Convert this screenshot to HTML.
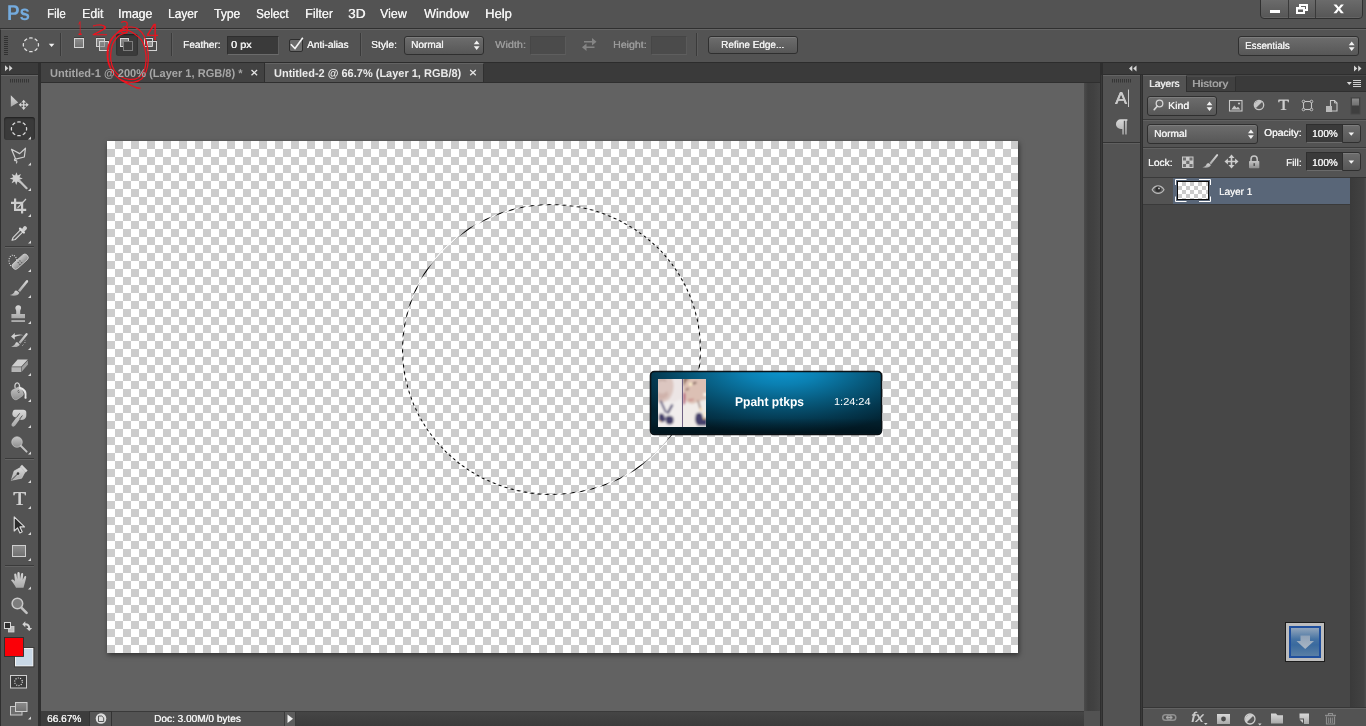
<!DOCTYPE html>
<html lang="en">
<head>
<meta charset="utf-8">
<title>Photoshop - Untitled-2</title>
<style>
html,body{margin:0;padding:0;background:#535353;}
body{width:1366px;height:726px;overflow:hidden;font-family:"Liberation Sans",sans-serif;}
#app{position:relative;width:1366px;height:726px;overflow:hidden;background:#535353;}
#app div{position:absolute;box-sizing:border-box;}
#ico{position:absolute;left:0;top:0;}
.t{text-rendering:geometricPrecision;position:absolute;white-space:pre;transform-origin:0 0;display:block;text-shadow:.35px 0 0 currentColor;}
.grad{background:linear-gradient(#6d6d6d,#575757);border:1px solid #2f2f2f;border-radius:3px;box-shadow:inset 0 1px 0 rgba(255,255,255,.12);}
.inp{background:#3a3a3a;border:1px solid #2e2e2e;border-bottom-color:#6b6b6b;border-right-color:#5f5f5f;}
.inpd{background:#4b4b4b;border:1px solid #464646;border-bottom-color:#5e5e5e;border-right-color:#5a5a5a;}
.sep{width:1px;background:#3a3a3a;box-shadow:1px 0 0 #5c5c5c;}

</style>
</head>
<body>
<div id="app">
<!-- menu bar -->
<div style="left:0;top:0;width:1366px;height:28px;background:#535353"></div>
<div style="left:1260px;top:-2px;width:103px;height:21px;border-radius:0 0 4px 4px;background:linear-gradient(#6c6c6c,#565656);border:1px solid #303030;box-shadow:inset 0 -1px 0 rgba(255,255,255,.08)"></div>
<div style="left:1288px;top:0;width:1px;height:18px;background:#3a3a3a"></div>
<div style="left:1315px;top:0;width:1px;height:18px;background:#3a3a3a"></div>
<!-- options bar -->
<div style="left:0;top:28px;width:1366px;height:1px;background:#303030"></div>
<div style="left:0;top:29px;width:1366px;height:33px;background:#535353;border-top:1px solid #656565;border-left:1px solid #303030"></div>
<div style="left:0;top:62px;width:1366px;height:1px;background:#2c2c2c"></div>
<div class="sep" style="left:60px;top:33px;height:23px"></div>
<div class="sep" style="left:171px;top:33px;height:23px"></div>
<div class="sep" style="left:360px;top:33px;height:23px"></div>
<div class="sep" style="left:696px;top:33px;height:23px"></div>
<div style="left:116px;top:34px;width:22px;height:22px;background:#3b3b3b;border-radius:3px;box-shadow:inset 0 1px 2px rgba(0,0,0,.5)"></div>
<div class="inp" style="left:227px;top:36px;width:52px;height:19px"></div>
<div style="left:289px;top:39px;width:14px;height:13px;background:#6b6b6b;border:1px solid #2e2e2e;border-radius:2px"></div>
<div class="grad" style="left:404px;top:36px;width:80px;height:19px"></div>
<div class="inpd" style="left:530px;top:36px;width:36px;height:19px"></div>
<div class="inpd" style="left:651px;top:36px;width:36px;height:19px"></div>
<div class="grad" style="left:708px;top:36px;width:90px;height:18px"></div>
<div class="grad" style="left:1238px;top:36px;width:121px;height:20px"></div>
<!-- toolbar -->
<div style="left:0;top:63px;width:41px;height:663px;background:#2f2f2f"></div>
<div style="left:1px;top:63px;width:37px;height:11px;background:#3b3b3b"></div>
<div style="left:1px;top:75px;width:37px;height:651px;background:#535353;border-top:1px solid #666"></div>
<div style="left:4px;top:117px;width:31px;height:23px;background:#3a3a3a;border-radius:3px;box-shadow:inset 0 1px 2px rgba(0,0,0,.5)"></div>
<div style="left:5px;top:246px;width:29px;height:1px;background:#3a3a3a;box-shadow:0 1px 0 #626262"></div>
<div style="left:5px;top:458px;width:29px;height:1px;background:#3a3a3a;box-shadow:0 1px 0 #626262"></div>
<div style="left:5px;top:565px;width:29px;height:1px;background:#3a3a3a;box-shadow:0 1px 0 #626262"></div>
<!-- document tab bar -->
<div style="left:41px;top:63px;width:1059px;height:20px;background:#3a3a3a"></div>
<div style="left:41px;top:63px;width:224px;height:19px;background:#424242;border-right:1px solid #2f2f2f"></div>
<div style="left:265px;top:63px;width:219px;height:19px;background:#535353;border-top:1px solid #636363;border-right:1px solid #303030"></div>
<div style="left:41px;top:82px;width:1059px;height:1px;background:#2f2f2f"></div>
<div style="left:484px;top:82px;width:616px;height:1px;background:#2f2f2f"></div>
<!-- canvas area -->
<div style="left:41px;top:83px;width:1043px;height:628px;background:#626262"></div>
<div style="left:1084px;top:83px;width:16px;height:628px;background:linear-gradient(90deg,#4b4b4b,#3f3f3f 25%,#414141 60%,#474747 100%)"></div>
<div id="doc" style="left:107px;top:141px;width:911px;height:512px;background-color:#fff;background-image:conic-gradient(#ccc 0 25%,#fff 0 50%,#ccc 0 75%,#fff 0);background-size:16px 16px;background-position:0 0;box-shadow:1px 2px 5px rgba(0,0,0,.5)"></div>
<!-- status bar -->
<div style="left:41px;top:711px;width:1059px;height:15px;background:linear-gradient(#454545,#3b3b3b);border-top:1px solid #3a3a3a"></div>
<div style="left:41px;top:711px;width:48px;height:15px;background:#3d3d3d"></div>
<div style="left:89px;top:711px;width:23px;height:15px;background:#555;border-left:1px solid #333;border-right:1px solid #333;border-top:1px solid #333"></div>
<div style="left:112px;top:711px;width:172px;height:15px;background:#535353;border-top:1px solid #3a3a3a"></div>
<div style="left:284px;top:711px;width:12px;height:15px;background:#5c5c5c;border-left:1px solid #3a3a3a;border-right:1px solid #3a3a3a;border-top:1px solid #3a3a3a"></div>
<div style="left:1084px;top:711px;width:16px;height:15px;background:#525252"></div>
<!-- right dock -->
<div style="left:1100px;top:63px;width:266px;height:663px;background:#2e2e2e"></div><div style="left:1101px;top:75px;width:1px;height:651px;background:#3a3a3a"></div><div style="left:1141px;top:75px;width:1px;height:651px;background:#3a3a3a"></div>
<div style="left:1103px;top:63px;width:263px;height:11px;background:#3a3a3a"></div>
<div style="left:1103px;top:75px;width:37px;height:651px;background:#535353;border-top:1px solid #646464"></div>
<div style="left:1103px;top:142px;width:37px;height:1px;background:#333;box-shadow:0 1px 0 #606060"></div>
<!-- layers panel -->
<div style="left:1143px;top:75px;width:223px;height:651px;background:#535353"></div>
<div style="left:1143px;top:75px;width:223px;height:17px;background:#3a3a3a;border-bottom:1px solid #2f2f2f;border-top:1px solid #474747"></div>
<div style="left:1143px;top:75px;width:44px;height:17px;background:#535353;border-top:1px solid #666;border-right:1px solid #2f2f2f"></div>
<div style="left:1187px;top:76px;width:49px;height:15px;background:#404040;border-right:1px solid #303030;border-top:1px solid #4a4a4a"></div>
<div class="grad" style="left:1147px;top:96px;width:70px;height:20px"></div>
<div style="left:1143px;top:119px;width:223px;height:1px;background:#3a3a3a;box-shadow:0 1px 0 #616161"></div>
<div class="grad" style="left:1147px;top:124px;width:111px;height:20px"></div>
<div style="left:1143px;top:147px;width:223px;height:1px;background:#3a3a3a;box-shadow:0 1px 0 #616161"></div>
<div class="inp" style="left:1306px;top:124px;width:37px;height:19px;border-right:none"></div>
<div class="grad" style="left:1342px;top:124px;width:19px;height:19px;border-radius:0 3px 3px 0"></div>
<div class="inp" style="left:1306px;top:152px;width:37px;height:19px;border-right:none"></div>
<div class="grad" style="left:1342px;top:152px;width:19px;height:19px;border-radius:0 3px 3px 0"></div>
<div style="left:1143px;top:177px;width:207px;height:531px;background:#474747;border-top:1px solid #3a3a3a"></div>
<div style="left:1350px;top:177px;width:16px;height:531px;background:linear-gradient(90deg,#3a3a3a,#424242 85%,#4d4d4d 100%);border-top:1px solid #333"></div>
<div style="left:1143px;top:178px;width:207px;height:27px;background:#535353;border-bottom:1px solid #3a3a3a"></div>
<div style="left:1173px;top:178px;width:177px;height:26px;background:#596678"></div>
<div style="left:1143px;top:707px;width:223px;height:19px;background:#535353;border-top:1px solid #363636;box-shadow:inset 0 1px 0 #626262"></div>
<!-- blue icon -->
<div style="left:1285px;top:622px;width:40px;height:40px;background:#bdbdbd;border:1px solid #1c1c1c"></div>
<div style="left:1289px;top:626px;width:32px;height:32px;border:2px solid #1f4f9e;background:linear-gradient(#93a6bb 0%,#4673a3 40%,#3a6a9e 60%,#5a7fa4 100%)"></div>

<svg id="cv" width="1366" height="726" viewBox="0 0 1366 726" style="position:absolute;left:0;top:0">
<g id="canvas">
<defs><pattern id="ants" width="8" height="8" patternUnits="userSpaceOnUse" patternTransform="translate(-.5 0)"><rect width="8" height="8" fill="#fff"/><path d="M0 0h4l-4 4zM8 0v4l-4 4h-4z" fill="#000"/></pattern></defs>
<ellipse cx="551.500" cy="349.500" rx="149" ry="145" fill="none" stroke="url(#ants)" stroke-width="1.100"/>
<!-- media widget -->
<defs>
<radialGradient id="wg" cx="0" cy="0" r="1" gradientUnits="userSpaceOnUse" gradientTransform="translate(782 368) scale(165 66)">
<stop offset="0" stop-color="#0d98d2"/><stop offset=".25" stop-color="#0b80b2"/><stop offset=".55" stop-color="#07587a"/><stop offset=".8" stop-color="#04384f"/><stop offset="1" stop-color="#022332"/>
</radialGradient>
<linearGradient id="wedge" x1="0" y1="0" x2="0" y2="1"><stop offset="0" stop-color="#000" stop-opacity="0"/><stop offset=".75" stop-color="#000" stop-opacity="0"/><stop offset="1" stop-color="#000" stop-opacity=".45"/></linearGradient>
<filter id="bl" x="-20%" y="-20%" width="140%" height="140%"><feGaussianBlur stdDeviation="1.050"/></filter>
<clipPath id="avc"><rect x="658" y="379" width="48" height="48"/></clipPath>
</defs>
<rect x="650.500" y="371.500" width="231" height="63" rx="4" fill="url(#wg)" stroke="#0c1216" stroke-width="1.600"/>
<rect x="651.500" y="372.500" width="229" height="61" rx="3.500" fill="url(#wedge)"/>
<!-- avatar (abstracted photo) -->
<rect x="658" y="379" width="48" height="48" fill="#ebe3e2"/>
<g clip-path="url(#avc)"><g filter="url(#bl)">
<rect x="656" y="377" width="27" height="52" fill="#ece5e5"/>
<path d="M656 377h15.500c2 4 2.500 9 1.500 14-1 4.500-3.500 8.500-6.500 10.500-3.500 1.500-7 1.200-10.500.5z" fill="#dcc6c0"/>
<path d="M658 392c3 2.500 6.500 2 9-1l1.500 4c-2.500 4-7 5.500-10.500 4z" fill="#cfb2ab"/>
<path d="M659 381c2-1.500 5-1.500 7 0" stroke="#b79a94" stroke-width="1.300" fill="none"/>
<path d="M656 402c4 1.500 8 1 11-1.500l6 2 9.500-4v30h-26.500z" fill="#f1eded"/>
<path d="M660.500 400.500l5.500 12" stroke="#45416f" stroke-width="1.800" fill="none"/>
<path d="M672.500 404.500l-5 9" stroke="#45416f" stroke-width="2.200" fill="none"/>
<path d="M659 414.500c1.500-1.500 3.800-1.200 5 .5l1.500 4c-.3 2-1.500 3.200-3.300 3.300-1.800 0-3-1-3.500-3z" fill="#45416c"/>
<path d="M666 416.500c2-1.300 5-1 7 .5.800 2 .8 4.500-.2 6.500-2 1.200-4.500 1.200-6.300 0-1-2.200-1.200-4.800-.5-7z" fill="#45416c"/>
<circle cx="660.300" cy="421.300" r=".9" fill="#e8b878"/>
<rect x="683" y="377" width="25" height="52" fill="#efe9e6"/>
<path d="M683 377h25v22c-3 3-7 4.500-11 4.800-4.500.7-8.500-.3-11-2.800-2-3-3-7-3-11z" fill="#dcc0b4"/>
<path d="M683 377h9c-3 1.200-5.500 3.500-7 6.500l-2 3z" fill="#9a7868"/>
<ellipse cx="694.500" cy="383.200" rx="2.200" ry="1" fill="#6d5048" transform="rotate(-25 694.500 383.200)"/>
<ellipse cx="687.300" cy="389.300" rx="1.900" ry=".9" fill="#7a5a50" transform="rotate(-25 687.300 389.300)"/>
<path d="M688.500 399.500c1.500 1 3.500.8 5-.6" stroke="#c27878" stroke-width="1.200" fill="none"/>
<path d="M683 392.500l2.200 1v10l-2.200 1.500z" fill="#b24c72"/>
<path d="M683 405c3-1.500 6-1.500 9-1l14-5v30h-23z" fill="#f0ebe8"/>
<path d="M698 400.500l3 10.500" stroke="#8a6e66" stroke-width="1.300" fill="none"/>
<path d="M696 414c2-1.800 4.300-1.800 6 0l1 4c2-.8 3.500-.3 4 1v6.500h-9c-2-1.500-3-4-3-7z" fill="#45416c"/>
<circle cx="690.600" cy="384.200" r="1.700" fill="#fff2cc"/><circle cx="705" cy="394.500" r="1.700" fill="#fffaf0"/><circle cx="701" cy="409.300" r="1.500" fill="#ffe7bd"/><circle cx="704.800" cy="413.800" r="1.500" fill="#ffe9c0"/><circle cx="704.300" cy="418.300" r="1.300" fill="#f5cf9a"/>
</g>
<rect x="682" y="379" width="1" height="48" fill="#6f6283"/>
</g>
</g>

</svg>
<svg id="ico" width="1366" height="726" viewBox="0 0 1366 726">
<defs>
<linearGradient id="gBox" x1="0" y1="0" x2="0" y2="1"><stop offset="0" stop-color="#8c8c8c"/><stop offset="1" stop-color="#707070"/></linearGradient>
<linearGradient id="gIco" x1="0" y1="0" x2="0" y2="1"><stop offset="0" stop-color="#d9d9d9"/><stop offset="1" stop-color="#a9a9a9"/></linearGradient>
<linearGradient id="gIco2" x1="0" y1="0" x2="0" y2="1"><stop offset="0" stop-color="#c4c4c4"/><stop offset="1" stop-color="#8e8e8e"/></linearGradient>
<linearGradient id="gArrow" x1="0" y1="0" x2="0" y2="1"><stop offset="0" stop-color="#8fa2b8"/><stop offset="1" stop-color="#a9b6c4"/></linearGradient>
</defs>

<g id="winctl" fill="#fff">
<rect x="1270" y="10" width="10" height="3"/>
<path d="M1299 4h9v7h-3v-2h1v-3h-5v1h-2zM1296 7h9v7h-9zM1298 9.500v2.500h5v-2.500z" fill-rule="evenodd"/>
<path d="M1333.5 4.5h3l2.2 2.8 2.2-2.8h3l-3.7 4.3 3.7 4.4h-3l-2.2-2.9-2.2 2.9h-3l3.7-4.4z"/>
</g>
<g id="tabx" fill="none" stroke-width="1.300">
<path d="M251.500 70l5.600 5.200M257.100 70l-5.600 5.200" stroke="#e4e4e4"/>
<path d="M470.200 70l5.600 5.200M475.800 70l-5.600 5.200" stroke="#e4e4e4"/>
</g>
<g id="opt">
<path d="M4 36.500h4M4 38.500h4M4 40.500h4M4 42.500h4M4 44.500h4M4 46.500h4M4 48.500h4M4 50.500h4M4 52.500h4M4 54.500h4" stroke="#313131" stroke-width="1" fill="none"/>
<ellipse cx="30.900" cy="44.800" rx="7.600" ry="6.900" fill="#5d5d5d" stroke="#e0e0e0" stroke-width="1.250" pathLength="80" stroke-dasharray="6.200 3.800" stroke-dashoffset="3.100"/>
<path d="M48.800 43.800h5.600l-2.800 3.300z" fill="#f2f2f2"/>
<!-- new selection -->
<rect x="74.500" y="38.500" width="9" height="9" fill="url(#gBox)" stroke="#d4d4d4"/>
<path d="M74 37.500h10" stroke="#3e3e3e"/>
<!-- add -->
<path d="M96 37.500h9M105 40.500h4" stroke="#3e3e3e"/>
<rect x="96.500" y="38.500" width="8" height="8" fill="url(#gBox)" stroke="#d4d4d4"/>
<rect x="99.500" y="41.500" width="9" height="9" fill="url(#gBox)" fill-opacity=".8" stroke="#d4d4d4"/>
<path d="M100.500 46.500h4v-4.500" fill="none" stroke="#b4b4b4" stroke-opacity=".7"/>
<!-- subtract (active) -->
<path d="M120 37.500h9" stroke="#2c2c2c"/>
<rect x="120.500" y="38.500" width="8" height="8" fill="url(#gBox)" stroke="#d8d8d8"/>
<rect x="123.500" y="41.500" width="9" height="9" fill="#404040" stroke="#7d7d7d"/>
<!-- intersect -->
<path d="M144 37.500h9M153 40.500h4" stroke="#3e3e3e"/>
<rect x="144.500" y="38.500" width="8" height="8" fill="#4c4c4c" stroke="#d4d4d4"/>
<rect x="147.500" y="41.500" width="9" height="9" fill="#4c4c4c" stroke="#d4d4d4"/>
<rect x="148" y="42" width="4" height="4" fill="#8f8f8f"/>
<path d="M147.500 46.500h5v-5" fill="none" stroke="#d4d4d4"/>
<!-- checkbox tick -->
<path d="M290.800 44.200l4.200 4.300 7.800-10.800" fill="none" stroke="#f4f4f4" stroke-width="1.600"/>
<!-- dropdown arrows -->
<path d="M473.800 44.200l2.900-3.700 2.900 3.700zM473.800 46.200l2.900 3.700 2.900-3.700z" fill="#f2f2f2"/>
<path d="M1348.800 45.200l2.900-3.700 2.900 3.700zM1348.800 47.200l2.900 3.700 2.900-3.700z" fill="#f2f2f2"/>
<!-- swap -->
<g fill="#858585"><path d="M584 41h8v-3l4.500 3.800-4.500 3.700v-3h-8z"/><path d="M594.500 46.500h-8v-3l-4.500 3.800 4.500 3.700v-3h8z"/></g>
</g>

<g id="tools">
<!-- header arrows + grip -->
<path d="M5 65.200l3.300 3-3.300 3zM9.200 65.200l3.300 3-3.300 3z" fill="#d6d6d6"/>
<path d="M10.5 79v3.500M12.500 79v3.500M14.500 79v3.500M16.500 79v3.500M18.500 79v3.500M20.500 79v3.500M22.500 79v3.500M24.500 79v3.500M26.500 79v3.500M28.500 79v3.500" stroke="#353535" fill="none"/>
<!-- corner triangles -->
<path id="tri" d="M0 0v3h-3z" fill="#d8d8d8" transform="translate(31 136.500)"/>
<g fill="#d8d8d8">
<path d="M31 162.500v3h-3z"/><path d="M31 188v3h-3z"/><path d="M31 214v3h-3z"/><path d="M31 240.500v3h-3z"/>
<path d="M31 269v3h-3z"/><path d="M31 295v3h-3z"/><path d="M31 321v3h-3z"/><path d="M31 347v3h-3z"/>
<path d="M31 373v3h-3z"/><path d="M31 399v3h-3z"/><path d="M31 425v3h-3z"/><path d="M31 451.500v3h-3z"/>
<path d="M31 480v3h-3z"/><path d="M31 506v3h-3z"/><path d="M31 532v3h-3z"/><path d="M31 558v3h-3z"/>
<path d="M31 586.500v3h-3z"/><path d="M31 716.500v3h-3z"/>
</g>
<!-- move -->
<path d="M10.800 95.200v11.600l7.400-4.300z" fill="url(#gIco)"/>
<path d="M23.700 99.800l2.300 2.600h-1.700v1.800h1.900v-1.600l2.500 2.200-2.500 2.200v-1.600h-1.900v1.900h1.700l-2.300 2.600-2.300-2.600h1.700v-1.900h-1.900v1.600l-2.500-2.200 2.500-2.200v1.600h1.900v-1.800h-1.700z" fill="#d4d4d4"/>
<!-- elliptical marquee -->
<ellipse cx="19" cy="128.800" rx="7.600" ry="6.900" fill="none" stroke="#dadada" stroke-width="1.250" pathLength="80" stroke-dasharray="6.200 3.800" stroke-dashoffset="3.100"/>
<!-- polygonal lasso -->
<path d="M11.500 149.300l8.200 4.300 5.800-5.400-1.200 8.800-8.600 2.200z" fill="none" stroke="#cfcfcf" stroke-width="1.200" stroke-linejoin="round"/>
<path d="M15.600 158.800c-1.800.3-1.400 2.200 0 1.800 1.500-.4 1.600 1.400.6 2.800" fill="none" stroke="#cfcfcf" stroke-width="1.100"/>
<!-- magic wand -->
<path d="M16.500 172.200l1.200 3.400 3.300-1.700-1.600 3.400 3.400 1.300-3.500 1.200 1.500 3.400-3.300-1.700-1.300 3.600-1.200-3.500-3.400 1.600 1.600-3.400-3.500-1.300 3.500-1.300-1.500-3.300 3.400 1.600z" fill="#d0d0d0"/>
<path d="M19.300 180.700l7.300 7.500" stroke="#c4c4c4" stroke-width="2.200" stroke-linecap="round"/>
<!-- crop -->
<path d="M14 198.500h2.200v10.300h10v2.200h-3.000v2.500h-2.200v-2.500h-7zM11 201.800h3v2.200h-3zM16.200 201.800h7v7h-2.200v-4.800h-4.800z" fill="#cdcdcd"/>
<path d="M17.500 208l8.500-9" stroke="#cdcdcd" stroke-width="1.100"/>
<!-- eyedropper -->
<path d="M12 240.300l1.200-3 8-8.200 2.200 2.200-8.200 8.200z" fill="#5a5a5a" stroke="#d4d4d4" stroke-width="1.100" stroke-linejoin="round"/>
<path d="M20 228.600l3.900 3.900" stroke="#dcdcdc" stroke-width="2.200" stroke-linecap="round"/>
<path d="M22.200 229.800l2-2.700c1-1 2.800.6 1.800 1.800l-2.500 2.200z" fill="#cfcfcf" stroke="#cfcfcf" stroke-width="1.400" stroke-linejoin="round"/>
<!-- spot healing -->
<ellipse cx="12.800" cy="260.800" rx="3.800" ry="5.600" fill="none" stroke="#e2e2e2" stroke-width="1.100" stroke-dasharray="1 1.300"/>
<rect x="-9.500" y="-3.300" width="19" height="6.600" rx="3" fill="url(#gIco2)" stroke="#d0d0d0" stroke-width=".8" transform="translate(20.200 261.700) rotate(-42)"/>
<path d="M17.700 262.200l1 .9M19.500 260.500l1 .9M19.400 264l1 .9M21.200 262.300l1 .9" stroke="#5a5a5a" stroke-width="1.100"/>
<!-- brush -->
<path d="M27.600 280.300c.8.600.7 1.300.2 2l-7.800 9.700-2-1.600 7.900-9.600c.5-.6 1.100-.9 1.700-.5z" fill="url(#gIco)"/>
<path d="M17.200 291l2.100 1.800c-.6 2.500-4.800 3.800-9.500 2.300 3-.4 4.400-2 5-4 .7-.8 1.700-.7 2.400-.1z" fill="url(#gIco)"/>
<!-- stamp -->
<path d="M18.400 305.300a2.700 2.700 0 0 1 2.700 2.700c0 1.100-.9 1.800-.9 3.100v3h4.800v4.200h-13.600v-4.200h4.800v-3c0-1.300-.9-2-.9-3.100a2.700 2.700 0 0 1 3.100-2.700z" fill="url(#gIco)"/>
<rect x="11.400" y="320.300" width="13.600" height="1.500" fill="#c4c4c4"/>
<!-- history brush -->
<path d="M27.200 333.200c.7.500.6 1.200.2 1.800l-7 8.700-1.800-1.500 7.100-8.600c.5-.5 1-.7 1.500-.4z" fill="url(#gIco)"/>
<path d="M17.900 342.800l1.900 1.600c-.6 2.200-4.300 3.300-8.700 2 2.800-.3 4-1.800 4.600-3.600.6-.6 1.600-.6 2.200 0z" fill="url(#gIco)"/>
<path d="M11 336.500l3.800-3.600v2.200c3.500-1 6.500-.9 9 .1-3.300-.1-6 .4-9 1.800v2.700z" fill="#cfcfcf"/>
<path d="M22.500 345.500l.8-.8M24.500 343l.7-.8M25 340.500l.5-.6" stroke="#d0d0d0" stroke-width="1"/>
<!-- eraser -->
<path d="M17.600 359.500h10.200l-6.500 7h-9.800z" fill="#cfcfcf"/>
<path d="M11.500 367.300h9.800v4.700h-9.800z" fill="#b4b4b4"/>
<path d="M21.900 366.900l6-6.500v4.200l-6 7z" fill="#9f9f9f"/>
<!-- paint bucket -->
<path d="M15.200 388.200c-.9-3.400.3-5.300 2-5.300 1.600 0 2.500 1.700 2.700 5.500" fill="none" stroke="#d6d6d6" stroke-width="1.200"/>
<path d="M13.300 389.500l5.800-2.800c1.400 1.700 2.800 3.400 3.800 5.600.7 1.600.5 3-.7 3.800l-5 3.300c-1.600.9-3.400.3-4.600-1.700-1.300-2.300-1.700-5-1.100-6.500.3-.8.900-1.300 1.800-1.700z" fill="url(#gIco2)" stroke="#cfcfcf" stroke-width=".5"/>
<path d="M19.300 386.800c2.600.4 5 1.700 6.300 3.800 1 1.700 1 3.800.8 5.800.4 1.300.2 2.300-.7 2.400-1 .1-1.500-.9-1.100-2.300.4-2-.1-3.800-1.300-5.300-1-1.300-2.400-2-4-2.300z" fill="#e6e6e6"/>
<path d="M17.500 391.200l1.400-.7M18.300 392.600l1.300-.6" stroke="#4a4a4a" stroke-width=".9"/>
<!-- smudge -->
<path d="M14.700 409.800h8.600c1.900 0 3 1 3 2.700v3c0 1.800-.9 3.200-2.500 3.900-1.500.7-2.900.6-4-.1l-4.600 6.300c-.9 1.100-2.200 1.300-3 .7-.9-.7-.9-1.900-.1-3l4.300-5.800c-1.600 0-2.800-.6-3.500-1.700-.7-1.200-.7-2.600-.2-3.900.4-1.300 1.100-2.100 2-2.100z" fill="url(#gIco)"/>
<path d="M16.400 417.600l3.300-4.300M19.600 419.200l2.800-3.700" stroke="#555" stroke-width="1"/>
<!-- dodge -->
<circle cx="17" cy="442" r="5.300" fill="url(#gIco2)" stroke="#cfcfcf" stroke-width=".6"/>
<path d="M20.800 445.800l5.800 5.800" stroke="#c2c2c2" stroke-width="2" stroke-linecap="round"/>
<!-- pen -->
<path d="M11.300 480.300l2.800-9.300 6.700-3.700 4.300 4.600-3.400 6.300z" fill="url(#gIco)" stroke="#d8d8d8" stroke-width=".6" stroke-linejoin="round"/>
<path d="M22 464.800l5.600 5.700-1.800 1.900-5.700-5.800z" fill="#d4d4d4"/>
<circle cx="18" cy="473.600" r="1.300" fill="#3a3a3a"/>
<path d="M11.500 480l6-6" stroke="#3a3a3a" stroke-width=".9"/>
<!-- rectangle tool -->
<rect x="12.500" y="545.500" width="13" height="11" fill="url(#gBox)" stroke="#cfcfcf"/>
<!-- path selection arrow -->
<path d="M14.200 516.800v14.200l3.400-3.100 2.300 5 2.300-1.100-2.300-4.900h4.600z" fill="#2b2b2b" stroke="#dcdcdc" stroke-width="1.100" stroke-linejoin="round"/>
<!-- hand -->
<path d="M16 587.800c-1.200-3-3-5-5-7.600.9-1.200 2.500-.7 4 1.300l-.8-7c.1-1.300 1.800-1.400 2.200 0l.9 4.800.1-6.200c.2-1.400 2-1.400 2.300 0l.3 6.100 1.100-5.300c.4-1.300 2-1.100 2.100.3l-.5 5.800 1.700-3.500c.6-1.100 2-.6 1.800.7-.8 3.700-1.600 6.800-2.700 10.600z" fill="url(#gIco)"/>
<!-- zoom -->
<circle cx="17.400" cy="603.500" r="5.300" fill="#7d7d7d" stroke="#c9c9c9" stroke-width="1.500"/>
<path d="M21.600 607.800l5 5.100" stroke="#c2c2c2" stroke-width="2.600" stroke-linecap="round"/>
<!-- default colours / swap -->
<rect x="8.500" y="626.500" width="5.500" height="5.500" fill="#bdbdbd" stroke="#d6d6d6" stroke-width=".8"/>
<rect x="4.500" y="622.500" width="6" height="6" fill="#2e2e2e" stroke="#d6d6d6"/>
<path d="M22.300 624.200l3-3v2c3 0 4.900 1.700 4.900 4.700h2l-3 3-3-3h2c0-1.800-1.100-2.700-2.900-2.700v2z" fill="#d2d2d2"/>
<!-- fg / bg swatches -->
<rect x="15.500" y="648.500" width="17.500" height="17.500" fill="#c9d8e6" stroke="#f4f4f4"/>
<rect x="14.500" y="647.500" width="19.500" height="19.500" fill="none" stroke="#3a3a3a" stroke-width=".8"/>
<rect x="5" y="638" width="18.500" height="18" fill="#fb0007"/>
<rect x="4.500" y="637.500" width="19" height="19" fill="none" stroke="#2d2d2d" stroke-width=".9"/>
<!-- quick mask -->
<rect x="10.500" y="675.500" width="16" height="12.500" fill="#3c3c3c" stroke="#cfcfcf"/>
<circle cx="18.500" cy="681.800" r="3.800" fill="none" stroke="#eeeeee" stroke-width="1.100" stroke-dasharray="1 1.390"/>
<!-- screen mode -->
<rect x="10.500" y="706.500" width="11.500" height="8.500" fill="#6d6d6d" stroke="#c9c9c9"/>
<rect x="15.500" y="702.500" width="11.500" height="9" fill="url(#gBox)" stroke="#cfcfcf"/>
</g>

<g id="panels">
<!-- dock header arrows -->
<path d="M1132.300 65.500v6l-3.300-3zM1136.500 65.500v6l-3.300-3z" fill="#d6d6d6"/>
<path d="M1354 65.500l3.300 3-3.300 3zM1358.200 65.500l3.300 3-3.300 3z" fill="#d6d6d6"/>
<path d="M1112.500 79v3.500M1114.500 79v3.500M1116.500 79v3.500M1118.500 79v3.500M1120.500 79v3.500M1122.500 79v3.500M1124.500 79v3.500M1126.500 79v3.500M1128.500 79v3.500M1130.500 79v3.500" stroke="#353535" fill="none"/>
<!-- character bar / paragraph -->
<path d="M1128.500 89.500v17.500" stroke="#c8c8c8" stroke-width="1"/>
<path d="M1120.800 119.300h6.600v1.500h-.7v13.800h-1.500v-13.800h-1.400v13.800h-1.500v-5.600h-1.500a4.850 4.850 0 0 1 0-9.700z" fill="url(#gIco)"/>
<!-- panel menu -->
<path d="M1346.800 82h5l-2.500 3z" fill="#d8d8d8"/>
<path d="M1353 80.500h8M1353 82.500h8M1353 84.500h8M1353 86.500h8" stroke="#d0d0d0" stroke-width="1"/>
<!-- kind magnifier -->
<circle cx="1159.500" cy="103.500" r="3.300" fill="none" stroke="#d4d4d4" stroke-width="1.300"/>
<path d="M1157.200 106.200l-3 3.400" stroke="#d4d4d4" stroke-width="1.600" stroke-linecap="round"/>
<path d="M1206.600 105.200l2.900-3.700 2.900 3.700zM1206.600 107.200l2.900 3.700 2.900-3.700z" fill="#f2f2f2"/>
<!-- filter: pixel -->
<rect x="1229.500" y="100.500" width="12.500" height="10.500" fill="none" stroke="#c9c9c9" stroke-width="1.100"/>
<path d="M1231.300 109.400l3-3.800 2.300 2.400 1.400-1.200 2.300 2.600z" fill="#c4c4c4"/><circle cx="1239" cy="103.500" r="1.100" fill="#c4c4c4"/>
<!-- filter: adjustment -->
<circle cx="1259" cy="105" r="4.700" fill="#5a5a5a" stroke="#c6c6c6" stroke-width="1.300"/>
<path d="M1255.700 108.300a4.700 4.700 0 0 1 6.600-6.600z" fill="#c6c6c6"/>
<!-- filter: shape -->
<rect x="1303.500" y="101.500" width="8" height="8" fill="none" stroke="#c6c6c6" stroke-width="1.100"/>
<g fill="#535353" stroke="#c6c6c6" stroke-width=".9"><circle cx="1303.500" cy="101.500" r="1.300"/><circle cx="1311.500" cy="101.500" r="1.300"/><circle cx="1303.500" cy="109.500" r="1.300"/><circle cx="1311.500" cy="109.500" r="1.300"/></g>
<!-- filter: smart object -->
<path d="M1330.500 100.500h4l2.500 2.500v8h-6.500z" fill="none" stroke="#c6c6c6" stroke-width="1.100"/>
<path d="M1334.500 100.500v2.500h2.500" fill="none" stroke="#c6c6c6" stroke-width=".9"/>
<rect x="1326" y="106" width="6" height="6" fill="#b9b9b9"/>
<!-- filter toggle -->
<rect x="1351" y="97.500" width="9" height="16.500" fill="#3f3f3f" stroke="#484848" stroke-width="1"/>
<rect x="1352" y="98.500" width="7" height="7" fill="url(#gBox)"/>
<!-- blend arrows -->
<path d="M1248 133.200l2.900-3.700 2.900 3.700zM1248 135.200l2.900 3.700 2.900-3.700z" fill="#f2f2f2"/>
<path d="M1348.500 132.500h5.600l-2.800 3.200z" fill="#f2f2f2"/>
<path d="M1348.500 160.500h5.600l-2.800 3.200z" fill="#f2f2f2"/>
<!-- lock icons -->
<rect x="1182" y="156.500" width="11.500" height="11.500" fill="#c9c9c9"/>
<g fill="#6e6e6e"><rect x="1183" y="157.500" width="3" height="3"/><rect x="1189.500" y="157.500" width="3" height="3"/><rect x="1186.200" y="160.800" width="3.200" height="3.200"/><rect x="1183" y="164" width="3" height="3"/><rect x="1189.500" y="164" width="3" height="3"/></g>
<path d="M1217.700 154.300c.6.400.5 1 .2 1.500l-6.900 8.600-1.600-1.300 7-8.500c.4-.4.900-.6 1.300-.3z" fill="url(#gIco)"/>
<path d="M1209.100 163.500l1.800 1.500c-.6 2.200-4.300 3.500-8.600 2.300 2.800-.4 3.900-1.800 4.500-3.500.7-.8 1.700-.8 2.300-.3z" fill="url(#gIco)"/>
<path d="M1231.500 154.500l3 3.400h-2.200v2.800h2.800v-2.200l3.400 3-3.400 3v-2.200h-2.800v2.800h2.200l-3 3.400-3-3.400h2.200v-2.800h-2.800v2.200l-3.400-3 3.400-3v2.200h2.800v-2.800h-2.200z" fill="#cdcdcd"/>
<path d="M1251 161.500v-2.300a3.100 3.100 0 0 1 6.200 0v2.300" fill="none" stroke="#c6c6c6" stroke-width="1.500"/>
<rect x="1249" y="161" width="10.300" height="7.200" rx=".8" fill="url(#gIco2)"/>
<rect x="1253.500" y="163.200" width="1.400" height="2.800" fill="#4a4a4a"/>
<!-- eye -->
<path d="M1152.200 189.700c3-5.200 8.800-5.200 11.800 0-3 4.800-8.800 4.800-11.800 0z" fill="#5a5a5a" stroke="#b9b9b9" stroke-width="1.200"/>
<circle cx="1158.100" cy="189.300" r="2.700" fill="#2f2f2f"/><circle cx="1159" cy="188.400" r=".9" fill="#d0d0d0"/>
<!-- layer thumbnail -->
<path d="M1175.500 185v-5.500h11M1199 179.500h11.500v5.500M1210.500 196.500v5h-11.500M1186.500 201.500h-11v-5" fill="none" stroke="#fff" stroke-width="1"/>
<rect x="1177" y="181" width="32" height="19" fill="#0c0c0c"/>
<rect x="1178" y="182" width="30" height="17" fill="#fff"/>
<g fill="#cbcbcb"><rect x="1182" y="182" width="4" height="4"/><rect x="1190" y="182" width="4" height="4"/><rect x="1198" y="182" width="4" height="4"/><rect x="1206" y="182" width="2" height="4"/><rect x="1178" y="186" width="4" height="4"/><rect x="1186" y="186" width="4" height="4"/><rect x="1194" y="186" width="4" height="4"/><rect x="1202" y="186" width="4" height="4"/><rect x="1182" y="190" width="4" height="4"/><rect x="1190" y="190" width="4" height="4"/><rect x="1198" y="190" width="4" height="4"/><rect x="1206" y="190" width="2" height="4"/><rect x="1178" y="194" width="4" height="4"/><rect x="1186" y="194" width="4" height="4"/><rect x="1194" y="194" width="4" height="4"/><rect x="1202" y="194" width="4" height="4"/><rect x="1182" y="198" width="4" height="1"/><rect x="1190" y="198" width="4" height="1"/><rect x="1198" y="198" width="4" height="1"/><rect x="1206" y="198" width="2" height="1"/></g>
<!-- bottom bar icons -->
<g fill="none" stroke="#8f8f8f" stroke-width="1.500"><rect x="1162.700" y="714.700" width="8.500" height="5.600" rx="2.800"/><rect x="1167.300" y="714.700" width="8.500" height="5.600" rx="2.800"/></g>
<path d="M1166 717.500h6.500" stroke="#a9a9a9" stroke-width="1.600"/>
<path d="M1204 723h3.600l-1.800 2z" fill="#d6d6d6"/>
<rect x="1217" y="714" width="13" height="10" fill="url(#gIco)"/><circle cx="1223.500" cy="719" r="2.400" fill="#4c4c4c"/>
<circle cx="1250" cy="719" r="5" fill="#5a5a5a" stroke="#cdcdcd" stroke-width="1.300"/><path d="M1246.500 722.500a5 5 0 0 1 7-7z" fill="#cdcdcd"/>
<path d="M1258 723.500h3.600l-1.800 2z" fill="#d6d6d6"/>
<path d="M1271 713.500h5l1.500 1.800h5.500v8.200h-12z" fill="url(#gIco)"/>
<path d="M1299.500 713.500h9.500v10.500h-5v-5.500h-4.500z" fill="url(#gIco)"/><path d="M1299.500 719.500h3.500v3.500z" fill="#d0d0d0"/>
<g stroke="#8d8d8d" fill="none"><path d="M1325 715.500h11" stroke-width="1.400"/><path d="M1328.500 715v-1.500h4v1.500" stroke-width="1.100"/><path d="M1326.500 716.500v7.500h8v-7.500" stroke-width="1.200"/><path d="M1328.700 717.500v5.500M1330.500 717.500v5.500M1332.300 717.500v5.500" stroke-width="1"/></g>
<!-- status bar icons -->
<circle cx="101" cy="718.500" r="5.300" fill="#dcdcdc"/>
<path d="M98.500 716h3.200l2 1.800v3.700h-5.200z" fill="#dcdcdc" stroke="#4a4a4a" stroke-width=".9"/>
<path d="M287.500 714.500v8.500l5.500-4.200z" fill="#f0f0f0"/>
<!-- blue icon arrow -->
<path d="M1300.500 635.500h9.500v5.500h4l-8.800 8-8.700-8h4z" fill="url(#gArrow)"/>
</g>

<g id="annot" fill="none" stroke="#f0121e" stroke-width="1.200" stroke-linecap="round" stroke-linejoin="round">
<path d="M127.3 32.5C126.0 33.0 121.8 33.8 119.6 35.3C117.4 36.8 115.5 39.1 114.1 41.4C112.7 43.7 111.8 46.0 111.3 49.1C110.8 52.2 110.3 56.6 110.8 60.1C111.3 63.6 112.4 67.2 114.1 70.0C115.8 72.8 118.1 75.0 120.7 76.6C123.3 78.2 126.5 79.2 129.5 79.4C132.4 79.6 136.0 79.1 138.4 77.7C140.8 76.3 142.6 74.0 143.9 71.1C145.2 68.2 145.9 63.8 146.1 60.1C146.3 56.4 145.7 52.4 145.0 49.1C144.3 45.8 143.4 42.8 141.7 40.3C140.0 37.8 137.5 35.9 135.0 34.2C132.5 32.5 129.2 30.5 126.5 30.2C123.8 29.9 120.8 31.0 118.5 32.2C116.2 33.4 114.2 35.4 112.5 37.5C110.8 39.6 109.5 42.0 108.6 44.6C107.7 47.2 107.2 50.4 107.2 53.4C107.2 56.4 107.5 59.8 108.3 62.8C109.1 65.8 110.4 68.8 111.9 71.3C113.5 73.8 115.4 75.9 117.6 77.6C119.8 79.3 122.4 80.5 125.1 81.3C127.8 82.1 131.2 82.6 134.0 82.2C136.8 81.8 139.6 80.7 141.7 78.8C143.8 76.9 145.2 74.2 146.3 71.1C147.4 68.0 148.1 64.1 148.3 60.1C148.5 56.1 148.1 51.0 147.4 46.9C146.7 42.8 145.4 38.8 143.9 35.8C142.4 32.8 140.4 30.7 138.4 29.2C136.4 27.7 134.2 27.1 131.7 27.0C129.2 26.9 126.1 27.3 123.5 28.4C120.9 29.5 118.5 31.4 116.3 33.6C114.1 35.8 112.0 38.6 110.6 41.5C109.2 44.4 108.4 47.7 108.1 51.0C107.8 54.3 107.8 58.0 108.6 61.5C109.3 65.0 110.8 68.9 112.6 71.8C114.4 74.7 116.9 77.0 119.5 79.0C122.1 81.0 125.2 82.4 128.0 83.8C130.8 85.2 134.2 86.9 136.2 87.6C138.2 88.3 139.4 88.1 140.0 88.2"/>
</g>

</svg>
<span class="t" style="left:47.19px;top:7px;font-size:13px;line-height:13px;font-weight:400;font-style:normal;color:#f1f1f1;transform:scaleX(0.8885);">File</span>
<span class="t" style="left:81.64px;top:7px;font-size:13px;line-height:13px;font-weight:400;font-style:normal;color:#f1f1f1;transform:scaleX(0.9472);">Edit</span>
<span class="t" style="left:117.64px;top:7px;font-size:13px;line-height:13px;font-weight:400;font-style:normal;color:#f1f1f1;transform:scaleX(0.9470);">Image</span>
<span class="t" style="left:168.47px;top:7px;font-size:13px;line-height:13px;font-weight:400;font-style:normal;color:#f1f1f1;transform:scaleX(0.9117);">Layer</span>
<span class="t" style="left:213.86px;top:7px;font-size:13px;line-height:13px;font-weight:400;font-style:normal;color:#f1f1f1;transform:scaleX(0.9216);">Type</span>
<span class="t" style="left:256.48px;top:7px;font-size:13px;line-height:13px;font-weight:400;font-style:normal;color:#f1f1f1;transform:scaleX(0.8974);">Select</span>
<span class="t" style="left:305.32px;top:7px;font-size:13px;line-height:13px;font-weight:400;font-style:normal;color:#f1f1f1;transform:scaleX(0.9678);">Filter</span>
<span class="t" style="left:348.25px;top:7px;font-size:13px;line-height:13px;font-weight:400;font-style:normal;color:#f1f1f1;transform:scaleX(1.0469);">3D</span>
<span class="t" style="left:380.03px;top:7px;font-size:13px;line-height:13px;font-weight:400;font-style:normal;color:#f1f1f1;transform:scaleX(0.9528);">View</span>
<span class="t" style="left:423.62px;top:7px;font-size:13px;line-height:13px;font-weight:400;font-style:normal;color:#f1f1f1;transform:scaleX(0.9656);">Window</span>
<span class="t" style="left:484.59px;top:7px;font-size:13px;line-height:13px;font-weight:400;font-style:normal;color:#f1f1f1;transform:scaleX(0.9988);">Help</span>
<span class="t" style="left:6.88px;top:3px;font-size:21.5px;line-height:21.5px;font-weight:700;font-style:normal;color:#74abde;transform:scaleX(0.8754);text-shadow:none;">Ps</span>
<span class="t" style="left:182.50px;top:41px;font-size:10.2px;line-height:10.2px;font-weight:400;font-style:normal;color:#f1f1f1;transform:scaleX(0.9856);">Feather:</span>
<span class="t" style="left:231.24px;top:41px;font-size:10.2px;line-height:10.2px;font-weight:400;font-style:normal;color:#f1f1f1;transform:scaleX(1.0652);">0 px</span>
<span class="t" style="left:307.29px;top:41px;font-size:10.2px;line-height:10.2px;font-weight:400;font-style:normal;color:#f1f1f1;transform:scaleX(0.9882);">Anti-alias</span>
<span class="t" style="left:371.48px;top:41px;font-size:10.2px;line-height:10.2px;font-weight:400;font-style:normal;color:#f1f1f1;transform:scaleX(1.0101);">Style:</span>
<span class="t" style="left:411.30px;top:41px;font-size:10.2px;line-height:10.2px;font-weight:400;font-style:normal;color:#f1f1f1;transform:scaleX(0.9868);">Normal</span>
<span class="t" style="left:495.24px;top:41px;font-size:10.2px;line-height:10.2px;font-weight:400;font-style:normal;color:#9b9b9b;transform:scaleX(1.0675);">Width:</span>
<span class="t" style="left:613.26px;top:41px;font-size:10.2px;line-height:10.2px;font-weight:400;font-style:normal;color:#9b9b9b;transform:scaleX(1.0372);">Height:</span>
<span class="t" style="left:721.30px;top:41px;font-size:10.2px;line-height:10.2px;font-weight:400;font-style:normal;color:#f1f1f1;transform:scaleX(0.9773);">Refine Edge...</span>
<span class="t" style="left:1245.31px;top:42px;font-size:10.2px;line-height:10.2px;font-weight:400;font-style:normal;color:#f1f1f1;transform:scaleX(0.9620);">Essentials</span>
<span class="t" style="left:49.93px;top:69px;font-size:11.3px;line-height:11.3px;font-weight:700;font-style:normal;color:#a6a6a6;transform:scaleX(0.9777);text-shadow:none;">Untitled-1 @ 200% (Layer 1, RGB/8) *</span>
<span class="t" style="left:274.03px;top:69px;font-size:11.3px;line-height:11.3px;font-weight:700;font-style:normal;color:#ebebeb;transform:scaleX(0.9729);text-shadow:none;">Untitled-2 @ 66.7% (Layer 1, RGB/8)</span>
<span class="t" style="left:1149.29px;top:80px;font-size:10.2px;line-height:10.2px;font-weight:400;font-style:normal;color:#ebebeb;transform:scaleX(0.9914);text-shadow:.55px 0 0 currentColor;">Layers</span>
<span class="t" style="left:1192.49px;top:80px;font-size:10.2px;line-height:10.2px;font-weight:400;font-style:normal;color:#a2a2a2;transform:scaleX(1.1362);text-shadow:.55px 0 0 currentColor;">History</span>
<span class="t" style="left:1168.27px;top:102px;font-size:10.2px;line-height:10.2px;font-weight:400;font-style:normal;color:#f1f1f1;transform:scaleX(1.0283);">Kind</span>
<span class="t" style="left:1154.29px;top:130px;font-size:10.2px;line-height:10.2px;font-weight:400;font-style:normal;color:#f1f1f1;transform:scaleX(0.9963);">Normal</span>
<span class="t" style="left:1264.28px;top:129px;font-size:10.2px;line-height:10.2px;font-weight:400;font-style:normal;color:#f1f1f1;transform:scaleX(1.0015);">Opacity:</span>
<span class="t" style="left:1311.90px;top:130px;font-size:10.2px;line-height:10.2px;font-weight:400;font-style:normal;color:#f1f1f1;transform:scaleX(0.9824);">100%</span>
<span class="t" style="left:1148.48px;top:159px;font-size:10.2px;line-height:10.2px;font-weight:400;font-style:normal;color:#f1f1f1;transform:scaleX(1.0030);">Lock:</span>
<span class="t" style="left:1286.31px;top:159px;font-size:10.2px;line-height:10.2px;font-weight:400;font-style:normal;color:#f1f1f1;transform:scaleX(0.9712);">Fill:</span>
<span class="t" style="left:1311.90px;top:159px;font-size:10.2px;line-height:10.2px;font-weight:400;font-style:normal;color:#f1f1f1;transform:scaleX(0.9824);">100%</span>
<span class="t" style="left:1218.60px;top:188px;font-size:10.2px;line-height:10.2px;font-weight:400;font-style:normal;color:#f1f1f1;transform:scaleX(0.9737);">Layer 1</span>
<span class="t" style="left:47.29px;top:715px;font-size:10.2px;line-height:10.2px;font-weight:400;font-style:normal;color:#f1f1f1;transform:scaleX(0.9899);">66.67%</span>
<span class="t" style="left:154.29px;top:715px;font-size:10.2px;line-height:10.2px;font-weight:400;font-style:normal;color:#f1f1f1;transform:scaleX(0.9878);">Doc: 3.00M/0 bytes</span>
<span class="t" style="left:735.06px;top:396px;font-size:12.6px;line-height:12.6px;font-weight:700;font-style:normal;color:#ffffff;transform:scaleX(0.9571);text-shadow:none;">Ppaht ptkps</span>
<span class="t" style="left:834.23px;top:398px;font-size:10.2px;line-height:10.2px;font-weight:400;font-style:normal;color:#ffffff;transform:scaleX(1.0745);text-shadow:none;">1:24:24</span>
<span class="t" style="left:12.58px;top:490px;font-size:19.5px;line-height:19.5px;font-family:'Liberation Serif', serif;font-weight:400;font-style:normal;color:#d2d2d2;transform:scaleX(1.0770);">T</span>
<span class="t" style="left:1277.65px;top:98px;font-size:15.5px;line-height:15.5px;font-family:'Liberation Serif', serif;font-weight:400;font-style:normal;color:#cfcfcf;transform:scaleX(1.1301);">T</span>
<span class="t" style="left:1115.20px;top:90px;font-size:17px;line-height:17px;font-weight:400;font-style:normal;color:#cacaca;transform:scaleX(1.0402);text-shadow:.5px 0 0 currentColor,0 .4px 0 currentColor;">A</span>
<span class="t" style="left:1190.52px;top:710px;font-size:14px;line-height:14px;font-weight:400;font-style:italic;color:#c9c9c9;transform:scaleX(1.1442);">fx</span>
<span class="t" style="left:78.13px;top:19px;font-size:20px;line-height:20px;font-weight:400;font-style:normal;color:#f2101c;transform:scaleX(0.3636);text-shadow:none;margin-left:0px;">1</span>
<span class="t" style="left:90.58px;top:20px;font-size:19px;line-height:19px;font-family:'DejaVu Sans', 'Liberation Sans', sans-serif;font-weight:200;font-style:normal;color:#f2101c;transform-origin:0 15px;transform:scale(1.5334,0.74);text-shadow:none;-webkit-text-stroke:.4px #f2101c;">2</span>
<span class="t" style="left:119.66px;top:20px;font-size:16px;line-height:16px;font-family:'DejaVu Sans', 'Liberation Sans', sans-serif;font-weight:200;font-style:normal;color:#f2101c;transform:scaleX(0.9306);text-shadow:none;-webkit-text-stroke:.4px #f2101c;">3</span>
<span class="t" style="left:145.91px;top:23px;font-size:22px;line-height:22px;font-family:'DejaVu Sans', 'Liberation Sans', sans-serif;font-weight:200;font-style:normal;color:#f2101c;transform:scaleX(0.9771);text-shadow:none;-webkit-text-stroke:.3px #f2101c;">4</span>
</div>
</body>
</html>
